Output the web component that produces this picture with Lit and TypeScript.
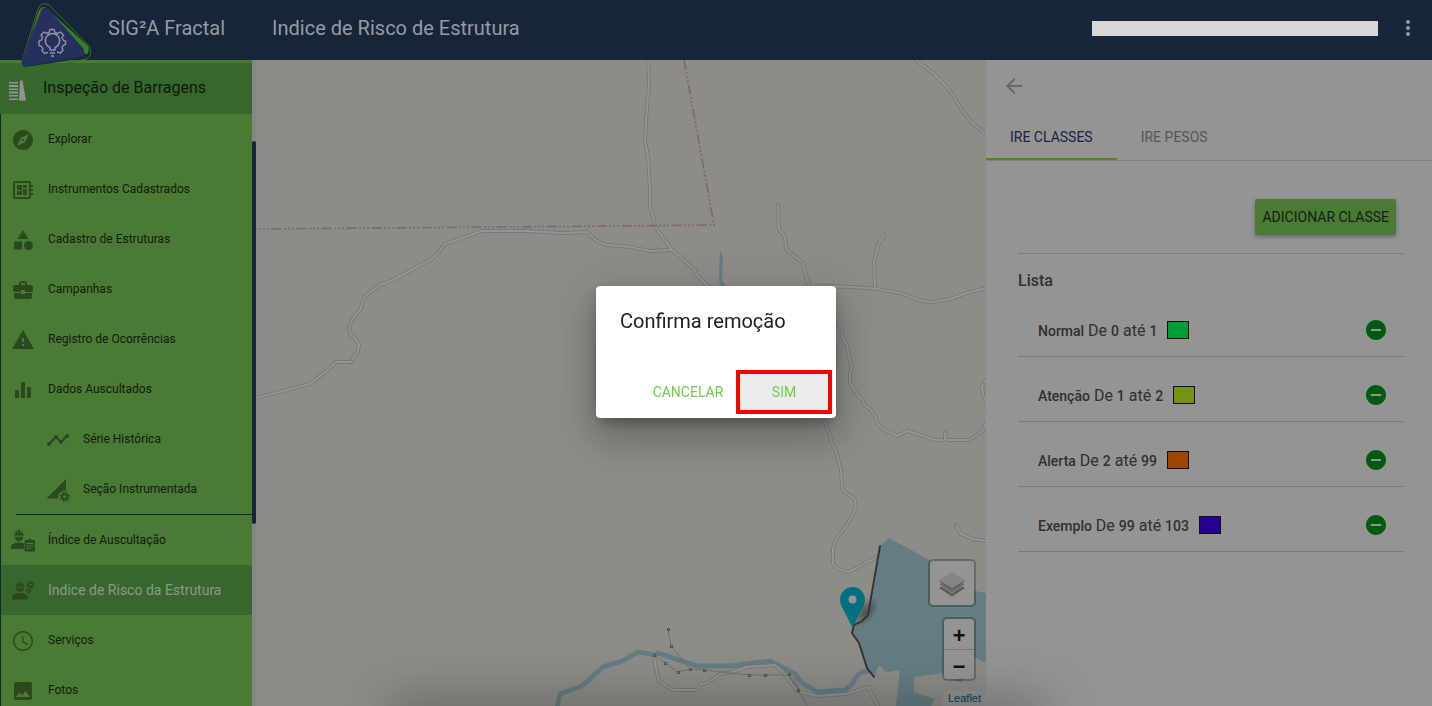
import { LitElement, html, css, svg } from "lit";
import { customElement, property } from "lit/decorators.js";

const gear = (cx: number, cy: number, r: number, width: number) => svg`
  <g fill="none" stroke="currentColor" transform="translate(${cx} ${cy})">
    <circle r="${r}" stroke-width="${width}"></circle>
    <circle r="${r + width * 0.9}" stroke-width="${width * 0.9}"
      stroke-dasharray="${(2 * Math.PI * (r + width * 0.9)) / 16}"></circle>
  </g>`;

const icons: Record<string, unknown> = {
  explore: svg`<path d="M12 10.9c-.61 0-1.1.49-1.1 1.1s.49 1.1 1.1 1.1c.61 0 1.1-.49 1.1-1.1s-.49-1.1-1.1-1.1zM12 2C6.48 2 2 6.48 2 12s4.48 10 10 10 10-4.48 10-10S17.52 2 12 2zm2.19 12.19L6 18l3.81-8.19L18 6l-3.81 8.19z"/>`,
  board: svg`<path d="M22 9V7h-2V5c0-1.1-.9-2-2-2H4c-1.1 0-2 .9-2 2v14c0 1.1.9 2 2 2h14c1.1 0 2-.9 2-2v-2h2v-2h-2v-2h2v-2h-2V9h2zm-4 10H4V5h14v14zM6 13h5v4H6zm6-6h4v3h-4zM6 7h5v5H6zm6 4h4v6h-4z"/>`,
  category: svg`<path d="M12 2l-5.5 9h11z"/><circle cx="17.5" cy="17.5" r="4.5"/><path d="M3 13.5h8v8H3z"/>`,
  business: svg`<path d="M10 16v-1H3.01L3 19c0 1.11.89 2 2 2h14c1.11 0 2-.89 2-2v-4h-7v1h-4zm10-9h-4.01V5l-2-2h-4l-2 2v2H4c-1.1 0-2 .9-2 2v3c0 1.11.89 2 2 2h6v-2h4v2h6c1.1 0 2-.9 2-2V9c0-1.1-.9-2-2-2zm-6 0h-4V5h4v2z"/>`,
  warning: svg`<path d="M1 21h22L12 2 1 21zm12-3h-2v-2h2v2zm0-4h-2v-4h2v4z"/>`,
  chart: svg`<path d="M10 20h4V4h-4v16zm-6 0h4v-8H4v8zM16 9v11h4V9h-4z"/>`,
  timeline: svg`<path d="M23 8c0 1.1-.9 2-2 2-.18 0-.35-.02-.51-.07l-3.56 3.55c.05.16.07.34.07.52 0 1.1-.9 2-2 2s-2-.9-2-2c0-.18.02-.36.07-.52l-2.55-2.55c-.16.05-.34.07-.52.07s-.36-.02-.52-.07l-4.55 4.56c.05.16.07.33.07.51 0 1.1-.9 2-2 2s-2-.9-2-2 .9-2 2-2c.18 0 .35.02.51.07l4.56-4.55C8.02 9.36 8 9.18 8 9c0-1.1.9-2 2-2s2 .9 2 2c0 .18-.02.36-.07.52l2.55 2.55c.16-.05.34-.07.52-.07s.36.02.52.07l3.55-3.56C19.02 8.35 19 8.18 19 8c0-1.1.9-2 2-2s2 .9 2 2z"/>`,
  section: svg`<path d="M.5 20.500L20 1v11.500a7 7 0 0 0-8 8z"/>${gear(18.700, 18.700, 2.600, 1.900)}`,
  engineerList: svg`<g transform="translate(-1 -1)"><path d="M1 21v-2.200c0-3 5-4.300 8-4.300 1.700 0 3.500.4 5 1V21zM4.600 8.800h8.800a4.400 4.400 0 0 1-8.800 0zM3.800 7.600h10.400v-1h-.8A4.600 4.600 0 0 0 11 2.800V5h-.8V1.500H7.800V5H7V2.800A4.600 4.600 0 0 0 4.600 6.600h-.8z"/><path fill-rule="evenodd" d="M15.500 12h2.700a1.800 1.800 0 0 1 3.400 0h2.400q1 0 1 1v9.500q0 1-1 1h-8.500q-1 0-1-1V13q0-1 1-1zm.8 3v1h7v-1zm0 2.500v1h7v-1zm0 2.500v1h4.500v-1z"/></g>`,
  engineer: svg`<path d="M1 20.500v-2.200c0-3 5-4.300 8-4.300s8 1.300 8 4.300v2.200zM4.900 8.600h8.200a4.100 4.100 0 0 1-8.200 0zM4.200 7.500h9.600v-1h-.7a4.300 4.300 0 0 0-2.300-3.200V5H10V2.900H8V5h-.8V3.300A4.300 4.300 0 0 0 4.900 6.500h-.7z"/>${gear(19.400, 5.800, 2.100, 1.400)}${gear(17.700, 12, 1.400, 1.100)}`,
  clock: svg`<path d="M11.990 2C6.470 2 2 6.480 2 12s4.470 10 9.990 10C17.520 22 22 17.520 22 12S17.520 2 11.990 2zM12 20.500c-4.700 0-8.500-3.800-8.500-8.500s3.800-8.500 8.500-8.500 8.500 3.800 8.500 8.500-3.800 8.500-8.500 8.500zm.5-13.500H11v6l5.250 3.150.75-1.230-4.500-2.670z"/>`,
  image: svg`<path d="M21 19V5c0-1.100-.9-2-2-2H5c-1.100 0-2 .9-2 2v14c0 1.100.9 2 2 2h14c1.100 0 2-.9 2-2zM8.500 13.500l2.500 3.010L14.500 12l4.500 6H5l3.500-4.500z"/>`,
  remove: svg`<path d="M12 2C6.480 2 2 6.480 2 12s4.480 10 10 10 10-4.480 10-10S17.520 2 12 2zm5 11H7v-2h10v2z"/>`,
  back: svg`<path d="M20 11H7.830l5.590-5.590L12 4l-8 8 8 8 1.410-1.410L7.830 13H20v-2z"/>`,
  more: svg`<path d="M12 8c1.100 0 2-.9 2-2s-.9-2-2-2-2 .9-2 2 .9 2 2 2zm0 2c-1.100 0-2 .9-2 2s.9 2 2 2 2-.9 2-2-.9-2-2-2zm0 6c-1.100 0-2 .9-2 2s.9 2 2 2 2-.9 2-2-.9-2-2-2z"/>`,
  dam: svg`<path d="M2 6h9v1.500H2zM2 9h9v2H2zM2 12.500h9V14H2zM2 15.500h9v2H2zM2 19h9v1.500H2zM2 22.500h9V24H2zM13 4.500h2.500L19 24.500h-7z"/>`,
};

const icon = (name: string) =>
  html`<svg class="icon" viewBox="0 0 24 24" aria-hidden="true">${icons[name]}</svg>`;

@customElement("top-bar")
class TopBar extends LitElement {
  static styles = css`
    :host {
      display: block;
      background: #172539;
      color: #959ba3;
      position: relative;
      z-index: 1;
    }
    .bar {
      display: flex;
      align-items: center;
      height: 60px;
      padding: 0 12px 4px 20px;
      box-sizing: border-box;
      font-size: 20px;
    }
    .logo {
      width: 73px;
      height: 73px;
      margin-top: 17px;
      flex: none;
    }
    .brand {
      margin-left: 15px;
    }
    .page {
      margin: 0 auto 0 47px;
      font-size: 20px;
      font-weight: 400;
    }
    .user {
      width: 286px;
      height: 15px;
      background: #d7d7d7;
    }
    .more {
      display: flex;
      margin-left: 18px;
      padding: 0;
      border: 0;
      background: none;
      color: inherit;
    }
    .icon {
      width: 24px;
      height: 24px;
      fill: currentColor;
    }
  `;
  render() {
    return html`<header class="bar">
      <svg class="logo" viewBox="20 0 73 73" aria-hidden="true">
        <path d="M38 9Q41 1 49 5L89 46Q94 54 86 59L29 71.500Q20 72 21.500 63Z" fill="none" stroke="#33731f" />
        <path d="M40 10Q43 4 47 6L87 47Q91 54 85 58L25 67Q20 66 23 58Z" fill="#1c2644" />
        <path d="M38 13Q40 6 45 7L88 46Q90 51 87 54L80 53 41 13 27 50Z" fill="#378121" />
        <path d="M41 11Q44 4 49 10L83 48Q87 55 80 57L27 66Q20 67 22 60Z" fill="#26305d" />
        <g fill="none" stroke="#8f94a8" stroke-width="1.400" transform="translate(0 -1.500)">
          <path d="M48 54l-3.500 1-2.500-3 1-2-2-2.500-2-.5v-4.500l2-.5 1.500-3-1.500-2.500 3-3 3 1.500 2-1 1-3h4l1 3 2.500 1 3-1.500 3 3-1.500 2.500 1.500 3 2 .5V46l-2 .5-1.500 2.500 1 2.500-2.500 3-3.500-1" />
          <path d="M50 51.500v-2.500a7.200 7.200 0 1 1 5 0V51.500zM50 54.500h5M51 57.500h3" />
        </g>
      </svg>
      <span class="brand">SIG²A Fractal</span>
      <h1 class="page">Indice de Risco de Estrutura</h1>
      <span class="user"></span>
      <button class="more" aria-label="Mais opções">${icon("more")}</button>
    </header>`;
  }
}

interface MenuItem {
  icon: string;
  label: string;
  kind?: string;
}

@customElement("side-menu")
class SideMenu extends LitElement {
  static styles = css`
    :host {
      display: flex;
      overflow: hidden;
      background: #868686;
    }
    .menu {
      width: 252px;
      background: #4a7a33;
      color: #111c0d;
    }
    .title {
      display: flex;
      align-items: center;
      gap: 12px;
      box-sizing: border-box;
      height: 51px;
      margin: 3px 0 0;
      padding: 0 0 2px 7px;
      background: #37672c;
      color: #0d180b;
      font-size: 16px;
      font-weight: 400;
    }
    .list {
      margin: 0;
      padding: 0;
      list-style: none;
      border-left: 1px solid #172539;
    }
    .item {
      display: flex;
      align-items: center;
      gap: 13px;
      height: 50px;
      padding-left: 10px;
      color: inherit;
      text-decoration: none;
      font-size: 12px;
    }
    .icon {
      flex: none;
      width: 24px;
      height: 24px;
      fill: currentColor;
      overflow: visible;
      color: #2c481f;
    }
    .title .icon {
      color: #949494;
    }
    .item .icon {
      margin-top: 2px;
    }
    .nested {
      padding-left: 45px;
    }
    .last {
      border-bottom: 1px solid #172539;
      margin-left: 15px;
      padding-left: 30px;
    }
    .active {
      background: #37672c;
      color: #8d9a88;
      font-size: 14px;
    }
    .track {
      width: 4px;
      padding-top: 81px;
    }
    .thumb {
      height: 383px;
      border-radius: 2px;
      background: #172442;
    }
  `;
  items: MenuItem[] = [
    { icon: "explore", label: "Explorar" },
    { icon: "board", label: "Instrumentos Cadastrados" },
    { icon: "category", label: "Cadastro de Estruturas" },
    { icon: "business", label: "Campanhas" },
    { icon: "warning", label: "Registro de Ocorrências" },
    { icon: "chart", label: "Dados Auscultados" },
    { icon: "timeline", label: "Série Histórica", kind: "nested" },
    { icon: "section", label: "Seção Instrumentada", kind: "nested last" },
    { icon: "engineerList", label: "Índice de Auscultação" },
    { icon: "engineer", label: "Indice de Risco da Estrutura", kind: "active" },
    { icon: "clock", label: "Serviços" },
    { icon: "image", label: "Fotos" },
  ];
  render() {
    return html`<nav class="menu">
        <h2 class="title">${icon("dam")}Inspeção de Barragens</h2>
        <ul class="list">
          ${this.items.map(
            (i) => html`<li><a class="item ${i.kind ?? ""}" href="#">${icon(i.icon)}<span>${i.label}</span></a></li>`
          )}
        </ul>
      </nav>
      <div class="track"><div class="thumb"></div></div>`;
  }
}

const roads = [
  "M256 398L287 390 310 384 324 373 336 362 351 362 358 351 359 345 356 339 351 335 349 328 353 318 360 310 365 296 380 285 393 280 417 267 432 259 438 253 445 244 482 231 527 231 563 233 587 232 597 241 607 245 630 247 650 251 672 250",
  "M648 60L649 84 646 120 645 140 648 157 650 190 650 206 656 228 672 250 694 269 696 274 707 285 730 305",
  "M916 60L933 73 948 88 962 110 971 122 983 132 986 133",
  "M778 205L779 229 785 237 786 249 795 257 802 262 809 286 820 315 836 328 842 332 843 338 847 345 849 357 852 367 850 373 850 382 856 393 862 399 864 404 870 409 876 418 877 423 883 429 897 436 908 431 935 440 942 440",
  "M945 433V439L947 440H969L983 431 986 423",
  "M986 380L982 387 983 394 986 402",
  "M820 286L853 287 877 289 900 293 922 301 933 302 950 299 967 293 986 288",
  "M884 235L878 245 876 254 874 260 875 289",
  "M815 400L823 418 829 433 832 443 836 452 841 470 842 487 844 492 851 496 855 500 856 507 853 514 847 525 836 540 833 548 833 564 838 569 848 572 857 568 865 563 876 558",
  "M956 525L961 534 973 539 986 541",
  "M654 657L657 673 659 681 673 690H697L701 684 707 683 720 674 733 672 747 667 775 665 783 672 797 691 817 696 847 694 868 687 878 706",
];

const pylons = [
  [668, 629], [671, 646], [690, 669], [678, 672], [665, 663], [654, 655],
  [704, 670], [749, 675], [765, 675], [789, 674], [798, 690],
];

@customElement("dam-map")
class DamMap extends LitElement {
  static styles = css`
    :host {
      display: block;
      position: relative;
      overflow: hidden;
      background: #8d8c87;
      font-family: "Liberation Sans", Arial, sans-serif;
    }
    .canvas {
      position: absolute;
      inset: 0;
      width: 100%;
      height: 100%;
    }
    .controls {
      position: absolute;
      right: 0;
      bottom: 0;
      display: flex;
      flex-direction: column;
      align-items: flex-end;
    }
    .control {
      margin: 0 10px 10px 0;
      border: 2px solid rgba(0, 0, 0, 0.25);
      border-radius: 5px;
      background: #949494;
      background-clip: padding-box;
    }
    .key {
      display: block;
      box-sizing: border-box;
      width: 30px;
      height: 30px;
      padding: 8px 0 0;
      border: 0;
      background: none;
      color: #111;
      font: bold 22px/22px "Liberation Mono", monospace;
    }
    .key + .key {
      border-top: 1px solid #777;
    }
    .layers {
      display: flex;
      align-items: center;
      justify-content: center;
      width: 44px;
      height: 44px;
      padding: 2px 0 0;
      border: 0;
      background: none;
    }
    .credit {
      padding: 0 5px;
      background: rgba(148, 148, 148, 0.7);
      color: #00465f;
      font-size: 11px;
      line-height: 15px;
      text-decoration: none;
    }
  `;
  render() {
    return html`<svg class="canvas" viewBox="256 60 730 646" preserveAspectRatio="xMinYMin slice" aria-hidden="true">
        <defs>
          <radialGradient id="shade"><stop offset="0" stop-color="#000" stop-opacity=".45" /><stop offset="1" stop-opacity="0" /></radialGradient>
        </defs>
        <g fill="#647d84">
          <path d="M720 250L723 257 722 279 727 290H722L719 280z" />
          <path d="M889 538L931 561 975 591 986 593V663L974 657 961 683 955 680 943 673 914 677V692L935 699 931 706H896L900 670 886 672 879 665 874 677 867 668 859 643 852 633 853 625 862 621 868 615 880 546z" />
        </g>
        <path d="M557 708L560 694 582 686 603 667 622 661 638 652 655 655 658 653 697 666H732L753 663 770 661 795 674 802 683 818 692 845 690 852 684 857 676 862 672 869 671" fill="none" stroke="#647d84" stroke-width="4.800" />
        <path d="M789 677L795 677 799 685 799 690 793 688z" fill="#857b85" />
        ${roads.map((d) => svg`<path d="${d}" fill="none" stroke="#787878" stroke-width="3.800" stroke-linejoin="round" stroke-linecap="round" />`)}
        ${roads.map((d) => svg`<path d="${d}" fill="none" stroke="#949494" stroke-width="2" stroke-linejoin="round" stroke-linecap="round" />`)}
        <path d="M684 60L714 225 620 226 256 229" fill="none" stroke="#7e6a7a" stroke-width="1.800" stroke-dasharray="10 2.500 2 2 2 2 2 2.500" />
        <path d="M668 629L671 646 690 669 678 672 665 663 654 655M690 669L704 670 749 675H789L798 690 807 706" fill="none" stroke="#6b6b69" stroke-width=".8" />
        ${pylons.map(([x, y]) => svg`<rect x="${x - 0.500}" y="${y - 0.500}" width="2" height="2" fill="#8d8c87" stroke="#505050" />`)}
        <ellipse cx="865" cy="612" rx="10" ry="18" transform="rotate(40 865 612)" fill="url(#shade)" />
        <path d="M880 546L868 615 862 621 854 625 852 633 859 643 867 668 874 677" fill="none" stroke="#333" stroke-width="1.900" stroke-linecap="round" />
        <path d="M852.500 627.500L842 607Q840 603 840 599.500A12.500 12.500 0 0 1 865 599.500Q865 603 863 607z" fill="#007083" />
        <circle cx="852.500" cy="599.500" r="4" fill="#949494" />
      </svg>
      <div class="controls">
        <div class="control">
          <button class="layers" aria-label="Camadas">
            <svg width="26" height="26" viewBox="0 0 26 26" aria-hidden="true">
              <path d="M0 17l13 8.500L26 17l-13-8z" fill="#5c5c5c" />
              <path d="M0 13.500L13 22l13-8.500-13-8z" fill="#6a6a6a" stroke="#949494" stroke-width=".8" />
              <path d="M0 10l13 8.500L26 10l-13-8z" fill="#505050" />
              <path d="M0 8.800L13 .5l13 8.300L13 17z" fill="#858585" stroke="#9a9a9a" stroke-width=".6" />
            </svg>
          </button>
        </div>
        <div class="control">
          <button class="key" aria-label="Aproximar">+</button>
          <button class="key" aria-label="Afastar">−</button>
        </div>
        <a class="credit" href="#">Leaflet</a>
      </div>`;
  }
}

@customElement("class-panel")
class ClassPanel extends LitElement {
  static styles = css`
    :host {
      display: block;
      background: #949494;
      color: #303030;
    }
    .icon {
      display: block;
      width: 24px;
      height: 24px;
      fill: currentColor;
    }
    .plain {
      padding: 0;
      border: 0;
      background: none;
    }
    .back {
      margin: 14px 16px;
      color: #666;
    }
    .tabs {
      display: flex;
      border-bottom: 1px solid #808080;
    }
    .tab {
      height: 48px;
      padding: 4px 24px 0;
      border: 0;
      border-bottom: 2px solid transparent;
      background: none;
      color: #565656;
      font: 14px Roboto, sans-serif;
    }
    .selected {
      border-bottom-color: #58860e;
      color: #172541;
    }
    .content {
      padding: 38px 28px 0 32px;
    }
    .actions {
      display: flex;
      justify-content: flex-end;
      padding: 0 8px 18px 0;
      border-bottom: 1px solid #7d7b7b;
    }
    .add {
      height: 36px;
      padding: 0 7px;
      border: 0;
      border-radius: 2px;
      background: #4a7a33;
      color: #16210f;
      font: 14px Roboto, sans-serif;
      box-shadow: 0 2px 4px rgba(0, 0, 0, 0.3);
    }
    .heading {
      margin: 17px 0 1px;
      font-size: 16px;
      line-height: 20px;
      font-weight: 500;
    }
    .rows {
      margin: 0;
      padding: 0;
      list-style: none;
    }
    .row {
      display: flex;
      align-items: center;
      box-sizing: border-box;
      height: 65px;
      padding: 12px 16px 0 20px;
      border-bottom: 1px solid #7d7979;
    }
    .label {
      white-space: pre;
      font-size: 16px;
    }
    .strong {
      font-size: 14px;
      font-weight: 500;
    }
    .swatch {
      box-sizing: border-box;
      width: 22px;
      height: 18px;
      margin: 0 auto 0 10px;
      border: 1px solid #111;
    }
    .remove {
      color: #005c12;
    }
  `;
  classes = [
    { name: "Normal", from: 0, to: 1, color: "#009c38" },
    { name: "Atenção", from: 1, to: 2, color: "#769115" },
    { name: "Alerta", from: 2, to: 99, color: "#a04500" },
    { name: "Exemplo", from: 99, to: 103, color: "#280094" },
  ];
  render() {
    return html`<button class="plain back" aria-label="Voltar">${icon("back")}</button>
      <div class="tabs" role="tablist">
        <button class="tab selected" role="tab" aria-selected="true">IRE CLASSES</button>
        <button class="tab" role="tab" aria-selected="false">IRE PESOS</button>
      </div>
      <div class="content">
        <div class="actions"><button class="add">ADICIONAR CLASSE</button></div>
        <h2 class="heading">Lista</h2>
        <ul class="rows">
          ${this.classes.map(
            (c) => html`<li class="row">
              <span class="label"><b class="strong">${c.name}</b> De <b class="strong">${c.from}</b> até <b class="strong">${c.to}</b></span>
              <span class="swatch" style="background:${c.color}"></span>
              <button class="plain remove" aria-label="Remover ${c.name}">${icon("remove")}</button>
            </li>`
          )}
        </ul>
      </div>`;
  }
}

@customElement("confirm-dialog")
class ConfirmDialog extends LitElement {
  @property() heading = "";
  static styles = css`
    :host {
      position: fixed;
      inset: 0;
      z-index: 2;
      display: grid;
      place-items: center;
      padding-bottom: 2px;
    }
    .dialog {
      width: 240px;
      border-radius: 4px;
      background: #fff;
      color: #212121;
      box-shadow: 0 11px 15px -7px rgba(0, 0, 0, 0.2), 0 24px 38px 3px rgba(0, 0, 0, 0.14),
        0 9px 46px 8px rgba(0, 0, 0, 0.12), 0 4px 12px rgba(0, 0, 0, 0.15);
    }
    .title {
      margin: 0;
      padding: 20px 24px 30px;
      font-size: 20px;
      line-height: 30px;
      font-weight: 400;
    }
    .buttons {
      display: flex;
      justify-content: flex-end;
      gap: 8px;
      padding: 8px;
    }
    .button {
      min-width: 88px;
      height: 36px;
      padding: 0 8px;
      border: 0;
      background: none;
      color: #70cb4b;
      font: 14px Roboto, sans-serif;
    }
    .focused {
      background: #ebebeb;
      outline: 4px solid #f00;
    }
  `;
  render() {
    return html`<section class="dialog" role="dialog" aria-modal="true" aria-label=${this.heading}>
      <h2 class="title">${this.heading}</h2>
      <div class="buttons">
        <button class="button">CANCELAR</button>
        <button class="button focused">SIM</button>
      </div>
    </section>`;
  }
}

@customElement("app-root")
class AppRoot extends LitElement {
  static styles = css`
    :host {
      display: flex;
      flex-direction: column;
      height: 100vh;
      overflow: hidden;
      font-family: Roboto, sans-serif;
    }
    .body {
      display: grid;
      grid-template-columns: 256px minmax(0, 1fr) 446px;
      grid-template-rows: minmax(0, 1fr);
      flex: 1;
      min-height: 0;
    }
    .edge {
      position: fixed;
      top: 100%;
      left: 27%;
      right: 27%;
      height: 20px;
      box-shadow: 0 0 50px rgba(0, 0, 0, 0.5);
    }
  `;
  render() {
    return html`<top-bar></top-bar>
      <main class="body">
        <side-menu></side-menu>
        <dam-map></dam-map>
        <class-panel></class-panel>
      </main>
      <div class="edge"></div>
      <confirm-dialog heading="Confirma remoção"></confirm-dialog>`;
  }
}
